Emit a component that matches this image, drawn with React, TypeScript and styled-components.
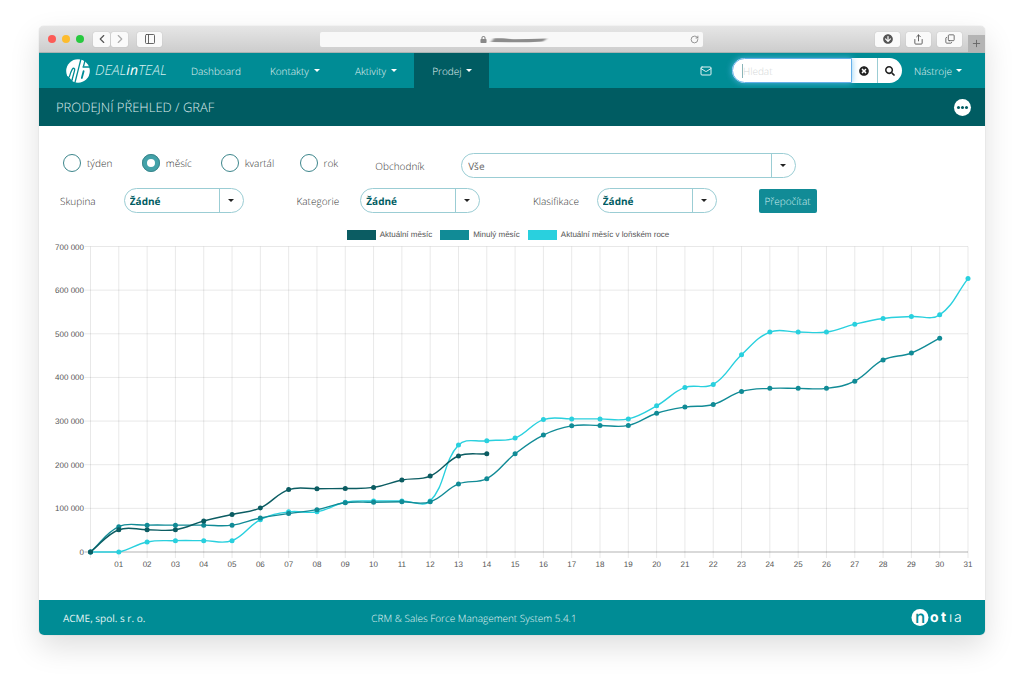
import React from 'react';
import styled, { createGlobalStyle, css } from 'styled-components';
import { ChevronLeft, ChevronRight, Copy, Mail, PanelLeft, Plus, RotateCw, Share } from 'lucide-react';
import { FaArrowCircleDown, FaLock, FaSearch, FaTimesCircle } from 'react-icons/fa';

const color = {
  teal: '#008c95',
  deep: '#005c62',
  seriesDark: '#0b5c62',
  seriesMid: '#118b96',
  seriesLight: '#29d0de',
  line: '#9bcdd4',
  text: '#333',
};

const GlobalStyle = createGlobalStyle`
  *, *::before, *::after { box-sizing: border-box; }
  body {
    margin: 0;
    background: #fff;
    color: ${color.text};
    font-family: "Open Sans", sans-serif;
    font-size: 10px;
    font-weight: 300;
    line-height: 14px;
    text-rendering: geometricPrecision;
  }
  button, input, select { font: inherit; color: inherit; margin: 0; text-rendering: inherit; }
`;

const Page = styled.div`
  padding: 26px 39px 52px;
`;

const Window = styled.div`
  border-radius: 5px;
  background: #fff;
  box-shadow: 0 0 1px rgba(0, 0, 0, 0.3), 0 12px 30px rgba(0, 0, 0, 0.13);
  overflow: hidden;
`;

/* Browser bar */

const BrowserBar = styled.div`
  display: grid;
  grid-template-columns: 281fr 383fr 282fr;
  align-items: center;
  height: 27px;
  background: linear-gradient(#e6e6e6, #cdcdcd);
  border-bottom: 1px solid #a9b3b3;
`;

const BarGroup = styled.div<{ $end?: boolean }>`
  display: flex;
  align-items: center;
  gap: ${(p) => (p.$end ? 6 : 9)}px;
  height: 26px;
  ${(p) => (p.$end ? 'justify-content: flex-end;' : 'padding-left: 9px;')}
`;

const Lights = styled.div`
  display: flex;
  gap: 6px;
`;

const Light = styled.span<{ $fill: string }>`
  width: 8px;
  height: 8px;
  border-radius: 50%;
  background: ${(p) => p.$fill};
`;

const Pair = styled.div`
  display: flex;
  gap: 1px;
`;

const BarButton = styled.button<{ $narrow?: boolean; $faint?: boolean }>`
  display: flex;
  align-items: center;
  justify-content: center;
  width: ${(p) => (p.$narrow ? 17 : 25)}px;
  height: 15px;
  padding: 0;
  border: 0;
  border-radius: 2px;
  background: #fafafa;
  color: ${(p) => (p.$faint ? '#aaa' : '#555')};
  box-shadow: 0 0 1px rgba(0, 0, 0, 0.25);
`;

const NewTab = styled.button`
  align-self: flex-end;
  display: flex;
  align-items: center;
  justify-content: center;
  width: 17px;
  height: 17px;
  padding: 0;
  border: 0;
  background: #b4b4b4;
  color: #666;
`;

const AddressBar = styled.div`
  display: grid;
  grid-template-columns: 1fr auto 1fr;
  align-items: center;
  height: 15px;
  padding: 0 4px 0 10px;
  border-radius: 2px;
  background: #f8f8f8;
  color: #888;
`;

const Address = styled.div`
  grid-column: 2;
  display: flex;
  align-items: center;
  gap: 2px;
`;

const Reload = styled.button`
  justify-self: end;
  display: flex;
  padding: 0;
  border: 0;
  background: none;
  color: #777;
`;

/* Application header */

const Nav = styled.nav`
  display: flex;
  align-items: stretch;
  height: 35px;
  padding: 0 23px 0 27px;
  background: ${color.teal};
  color: #e3f3f4;
`;

const Brand = styled.a`
  display: flex;
  align-items: center;
  gap: 5px;
  width: 107px;
  color: #fff;
  text-decoration: none;
  font-size: 14px;
  font-style: italic;
  line-height: 20px;
  white-space: nowrap;
`;

const BrandName = styled.span`
  color: #d5eeef;
  b { color: #fff; }
`;

const NavLink = styled.a<{ $active?: boolean; $plain?: boolean }>`
  display: flex;
  align-items: center;
  gap: 5px;
  padding: 0 ${(p) => (p.$plain ? 11 : 17)}px 0 18px;
  background: ${(p) => (p.$active ? color.deep : 'transparent')};
  color: inherit;
  text-decoration: none;
`;

const Caret = styled.span`
  border: 3px solid transparent;
  border-top-color: #fff;
  border-bottom: 0;
`;

const NavEnd = styled.div`
  display: flex;
  align-items: center;
  margin-left: auto;
`;

const IconLink = styled.a`
  display: flex;
  margin-right: 20px;
  color: inherit;
`;

const Search = styled.form`
  display: flex;
  height: 25px;
  margin-right: 12px;
  border-radius: 13px;
  background: #fff;
  color: #222;
`;

const SearchField = styled.div`
  display: flex;
  align-items: center;
  width: 120px;
  padding-left: 9px;
  border: 1px solid #66afe9;
  border-radius: 13px 0 0 13px;
  box-shadow: 0 0 6px rgba(102, 190, 240, 0.8);
`;

const TextCursor = styled.span`
  width: 1px;
  height: 14px;
  background: #8ab5b9;
`;

const SearchInput = styled.input`
  flex: 1;
  min-width: 0;
  height: 20px;
  padding: 0;
  border: 0;
  outline: 0;
  background: none;
  &::placeholder { color: #d4d8d8; opacity: 1; }
`;

const SearchButton = styled.button`
  display: flex;
  align-items: center;
  justify-content: center;
  width: 25px;
  padding: 0;
  border: 0;
  background: none;
  & + & { border-left: 1px solid ${color.line}; }
`;

const ToolsLink = styled(NavLink)`
  gap: 4px;
  padding: 0;
`;

const TitleBar = styled.header`
  display: flex;
  align-items: center;
  justify-content: space-between;
  height: 38px;
  padding: 0 14px 0 17px;
  background: ${color.deep};
`;

const Title = styled.h1`
  margin: 0;
  color: #dcebec;
  font-size: 13px;
  font-weight: 300;
  line-height: 18px;
`;

const MoreButton = styled.button`
  display: flex;
  align-items: center;
  justify-content: center;
  gap: 1px;
  width: 17px;
  height: 17px;
  padding: 0;
  border: 0;
  border-radius: 50%;
  background: #fff;
`;

const Dot = styled.span`
  width: 3px;
  height: 3px;
  border-radius: 50%;
  background: ${color.deep};
`;

/* Filters */

const Main = styled.main`
  padding: 27px 0 28px;
`;

const Filters = styled.form`
  display: grid;
  grid-template-columns: repeat(12, 1fr);
  row-gap: 10px;
  align-items: center;
`;

const Period = styled.label`
  display: flex;
  align-items: center;
  align-self: start;
  gap: 6px;
  height: 20px;
  padding-left: 24px;
`;

const Radio = styled.input`
  appearance: none;
  width: 18px;
  height: 18px;
  margin: 0;
  border: 1px solid #3d868c;
  border-radius: 50%;
  background: #fff;
  &:checked { border: 5px solid #43a2a9; outline: 1px solid #3d868c; outline-offset: -1px; }
`;

const FieldLabel = styled.label`
  padding-left: 21px;
`;

const SelectFrame = styled.div<{ $wide?: boolean }>`
  position: relative;
  display: flex;
  height: 25px;
  border: 1px solid ${color.line};
  border-radius: 13px;
  color: #222;
  ${(p) =>
    p.$wide
      ? css`grid-column: span 5; margin: 0 31px 0 28px;`
      : css`grid-column: span 2; margin: 0 32px 0 6px;`}

  &::before {
    content: "";
    position: absolute;
    top: 0;
    right: 23px;
    bottom: 0;
    border-left: 1px solid ${color.line};
  }
  &::after {
    content: "";
    position: absolute;
    top: 10px;
    right: 9px;
    border: 3px solid transparent;
    border-top-color: currentColor;
    border-bottom: 0;
  }
`;

const Select = styled.select<{ $strong?: boolean }>`
  appearance: none;
  flex: 1;
  min-width: 0;
  padding: 0 24px 0 ${(p) => (p.$strong ? 5 : 6)}px;
  border: 0;
  outline: 0;
  background: none;
  color: ${(p) => (p.$strong ? color.deep : '#666')};
  font-weight: ${(p) => (p.$strong ? 700 : 400)};
`;

const Submit = styled.button`
  justify-self: start;
  grid-column: span 3;
  height: 24px;
  margin-left: 10px;
  padding: 0 6px;
  border: 0;
  border-radius: 2px;
  background: ${color.seriesMid};
  color: #d3eef0;
`;

/* Chart */

const Legend = styled.ul`
  display: flex;
  justify-content: center;
  gap: 8px;
  margin: 17px 0 0;
  padding: 0 8px 0 0;
  list-style: none;
  color: #555;
  font-family: "Liberation Sans", sans-serif;
  font-size: 8px;
  font-weight: 400;
  line-height: 10px;
`;

const LegendItem = styled.li<{ $fill: string }>`
  display: flex;
  gap: 4px;
  &::before {
    content: "";
    width: 29px;
    height: 10px;
    background: ${(p) => p.$fill};
  }
`;

const Chart = styled.svg`
  display: block;
  width: 100%;
  height: auto;
  text {
    fill: #555;
    font-family: "Liberation Sans", sans-serif;
    font-size: 8px;
    font-weight: 400;
  }
`;

const Footer = styled.footer`
  display: grid;
  grid-template-columns: repeat(3, 1fr);
  align-items: center;
  height: 35px;
  background: ${color.teal};
  color: #e3f3f4;
`;

const Company = styled.span`
  padding-left: 24px;
  font-weight: 400;
`;

const Product = styled.span`
  padding-left: 17px;
`;

const Vendor = styled.a`
  display: flex;
  justify-self: end;
  margin-right: 22px;
`;

type Series = { name: string; color: string; values: number[] };

/* Cumulative sales in thousands, indexed by day of the month */
const series: Series[] = [
  {
    name: 'Aktuální měsíc',
    color: color.seriesDark,
    values: [0, 51, 51, 51, 71, 86, 101, 143, 145, 145.5, 148, 165, 174, 220, 225],
  },
  {
    name: 'Minulý měsíc',
    color: color.seriesMid,
    values: [
      0, 58, 61.5, 61.5, 61.5, 61.5, 78, 88, 97, 113, 114, 115, 115, 156, 168, 225, 268, 289, 290, 290, 318, 332,
      338, 368, 375, 375, 375, 391.5, 440, 456, 490,
    ],
  },
  {
    name: 'Aktuální měsíc v loňském roce',
    color: color.seriesLight,
    values: [
      0, 0, 23, 26, 26, 26, 74, 92, 92, 114, 117, 117, 117, 245, 255, 261, 303.5, 305, 305, 305, 335, 377, 384,
      452, 504, 504, 504, 522, 535, 539.5, 543.5, 626.5,
    ],
  },
];

const plot = { left: 51.5, right: 929, top: 6.5, bottom: 312 };
const days = Array.from({ length: 32 }, (_, i) => i);
const xAt = (day: number) => plot.left + ((plot.right - plot.left) * day) / 31;
const yAt = (value: number) => plot.bottom - ((plot.bottom - plot.top) * value) / 700;

function smoothPath(values: number[]) {
  const pts = values.map((v, i) => ({ x: xAt(i), y: yAt(v) }));
  const clamp = (y: number) => Math.min(plot.bottom, Math.max(plot.top, y));
  const ctrl = pts.map((p, i) => {
    const a = pts[Math.max(0, i - 1)];
    const b = pts[Math.min(pts.length - 1, i + 1)];
    const da = Math.hypot(p.x - a.x, p.y - a.y);
    const db = Math.hypot(b.x - p.x, b.y - p.y);
    const fa = (0.4 * da) / (da + db);
    const fb = (0.4 * db) / (da + db);
    return {
      inX: p.x - fa * (b.x - a.x),
      inY: clamp(p.y - fa * (b.y - a.y)),
      outX: p.x + fb * (b.x - a.x),
      outY: clamp(p.y + fb * (b.y - a.y)),
    };
  });
  return pts
    .map((p, i) =>
      i === 0
        ? `M${p.x} ${p.y}`
        : `C${ctrl[i - 1].outX} ${ctrl[i - 1].outY} ${ctrl[i].inX} ${ctrl[i].inY} ${p.x} ${p.y}`,
    )
    .join('');
}

function SalesChart() {
  return (
    <Chart viewBox="0 0 946 332" role="img" aria-label="Prodejní přehled">
      {[0, 100, 200, 300, 400, 500, 600, 700].map((v) => (
        <g key={v}>
          <line x1={plot.left - 6} x2={plot.right} y1={yAt(v)} y2={yAt(v)} stroke="#000" strokeOpacity={v ? 0.09 : 0.3} />
          <text x={45} y={yAt(v) + 3} textAnchor="end">{v ? `${v} 000` : '0'}</text>
        </g>
      ))}
      {days.map((d) => (
        <g key={d}>
          <line x1={xAt(d)} x2={xAt(d)} y1={plot.top} y2={plot.bottom + 6} stroke="#000" strokeOpacity={0.09} />
          {d > 0 && <text x={xAt(d)} y={327} textAnchor="middle">{String(d).padStart(2, '0')}</text>}
        </g>
      ))}
      {[...series].reverse().map((s) => (
        <g key={s.name} fill={s.color}>
          <path d={smoothPath(s.values)} fill="none" stroke={s.color} strokeWidth={1.4} />
          {s.values.map((v, i) => (
            <circle key={i} cx={xAt(i)} cy={yAt(v)} r={2.5} />
          ))}
        </g>
      ))}
    </Chart>
  );
}

function BrandMark() {
  return (
    <svg width="24" height="24" viewBox="0 0 24 24" aria-hidden="true">
      <circle cx="12" cy="12" r="11.8" fill="#fff" />
      <g fill="none" stroke={color.teal}>
        <path d="M-1 17 2.4 17.4 5.4 21 7 18.4 6 25H-1z" fill={color.teal} stroke="none" />
        <path d="M15.2 -1 8.6 25" strokeWidth="1.3" />
        <path d="M6 21 8.6 11.4C9.2 9 7.4 8.6 6.2 10.4 5 12.4 4 15.4 3.2 18.4" strokeWidth="1.3" />
        <path d="M19.4 0 17.4 7.6" strokeWidth="1.3" />
        <path d="M16.6 8H25" strokeWidth="1.6" />
        <path d="M17.6 12.2 15.8 19" strokeWidth="1.8" strokeLinecap="round" />
      </g>
    </svg>
  );
}

function VendorMark() {
  return (
    <svg
      width="52"
      height="22"
      viewBox="0 0 52 22"
      overflow="visible"
      aria-label="notia"
      fontFamily="Inter, sans-serif"
      fill="#fff"
    >
      <circle cx="9" cy="10.5" r="8.5" />
      <text x="9" y="16" fontSize="17" fontWeight="500" textAnchor="middle" fill={color.teal}>n</text>
      <text x="19" y="15" fontSize="14" fontWeight="700">o</text>
      <text x="30" y="15" fontSize="14" fontWeight="700">t</text>
      <text x="38" y="15" fontSize="14" fontWeight="300">ı</text>
      <text x="43" y="15" fontSize="14" fontWeight="300">a</text>
    </svg>
  );
}

function HiddenAddress() {
  return (
    <svg width="60" height="9" viewBox="0 0 60 9" aria-hidden="true">
      <filter id="smear" x="-10%" y="-100%" width="120%" height="300%">
        <feGaussianBlur stdDeviation="1.6 0.7" />
      </filter>
      <path
        d="M2 7 5 3.2H14L24 4.2 40 4 58 3.4 54 6.4 40 7.2H20z"
        filter="url(#smear)"
        fill="#8c8c8c"
      />
    </svg>
  );
}

const groupFilters = [
  { id: 'group', label: 'Skupina' },
  { id: 'category', label: 'Kategorie' },
  { id: 'class', label: 'Klasifikace' },
];

export default function App() {
  return (
    <Page>
      <GlobalStyle />
      <Window>
        <BrowserBar>
          <BarGroup>
            <Lights>
              <Light $fill="#fc5b57" />
              <Light $fill="#fdbc2e" />
              <Light $fill="#27c93f" />
            </Lights>
            <Pair>
              <BarButton $narrow aria-label="Zpět"><ChevronLeft size={14} /></BarButton>
              <BarButton $narrow $faint aria-label="Vpřed"><ChevronRight size={14} /></BarButton>
            </Pair>
            <BarButton aria-label="Postranní panel"><PanelLeft size={12} strokeWidth={1.8} /></BarButton>
          </BarGroup>
          <AddressBar>
            <Address><FaLock size={7} /><HiddenAddress /></Address>
            <Reload aria-label="Obnovit"><RotateCw size={9} /></Reload>
          </AddressBar>
          <BarGroup $end>
            <BarButton aria-label="Stažené soubory"><FaArrowCircleDown size={10} /></BarButton>
            <BarButton aria-label="Sdílet"><Share size={11} /></BarButton>
            <BarButton aria-label="Panely"><Copy size={10} transform="scale(1 -1)" /></BarButton>
            <NewTab aria-label="Nový panel"><Plus size={11} /></NewTab>
          </BarGroup>
        </BrowserBar>

        <Nav>
          <Brand href="#">
            <BrandMark />
            <BrandName>DEAL<b>in</b>TEAL</BrandName>
          </Brand>
          <NavLink href="#" $plain>Dashboard</NavLink>
          <NavLink href="#">Kontakty <Caret /></NavLink>
          <NavLink href="#">Aktivity <Caret /></NavLink>
          <NavLink href="#" $active>Prodej <Caret /></NavLink>
          <NavEnd>
            <IconLink href="#" aria-label="Zprávy"><Mail size={12} /></IconLink>
            <Search>
              <SearchField>
                <TextCursor />
                <SearchInput type="text" placeholder="Hledat" aria-label="Hledat" />
              </SearchField>
              <SearchButton type="reset" aria-label="Vymazat"><FaTimesCircle size={10} /></SearchButton>
              <SearchButton type="button" aria-label="Vyhledat"><FaSearch size={10} /></SearchButton>
            </Search>
            <ToolsLink href="#">Nástroje <Caret /></ToolsLink>
          </NavEnd>
        </Nav>

        <TitleBar>
          <Title>PRODEJNÍ PŘEHLED / GRAF</Title>
          <MoreButton aria-label="Další"><Dot /><Dot /><Dot /></MoreButton>
        </TitleBar>

        <Main>
          <Filters>
            {['týden', 'měsíc', 'kvartál', 'rok'].map((name) => (
              <Period key={name}>
                <Radio type="radio" name="period" value={name} defaultChecked={name === 'měsíc'} />
                {name}
              </Period>
            ))}
            <FieldLabel htmlFor="seller">Obchodník</FieldLabel>
            <SelectFrame $wide>
              <Select id="seller"><option>Vše</option></Select>
            </SelectFrame>
            <span />
            <span />
            {groupFilters.map((f) => (
              <React.Fragment key={f.id}>
                <FieldLabel htmlFor={f.id}>{f.label}</FieldLabel>
                <SelectFrame>
                  <Select id={f.id} $strong><option>Žádné</option></Select>
                </SelectFrame>
              </React.Fragment>
            ))}
            <Submit type="button">Přepočítat</Submit>
          </Filters>
          <Legend>
            {series.map((s) => (
              <LegendItem key={s.name} $fill={s.color}>{s.name}</LegendItem>
            ))}
          </Legend>
          <SalesChart />
        </Main>

        <Footer>
          <Company>ACME, spol. s r. o.</Company>
          <Product>CRM &amp; Sales Force Management System 5.4.1</Product>
          <Vendor href="#" aria-label="notia"><VendorMark /></Vendor>
        </Footer>
      </Window>
    </Page>
  );
}
